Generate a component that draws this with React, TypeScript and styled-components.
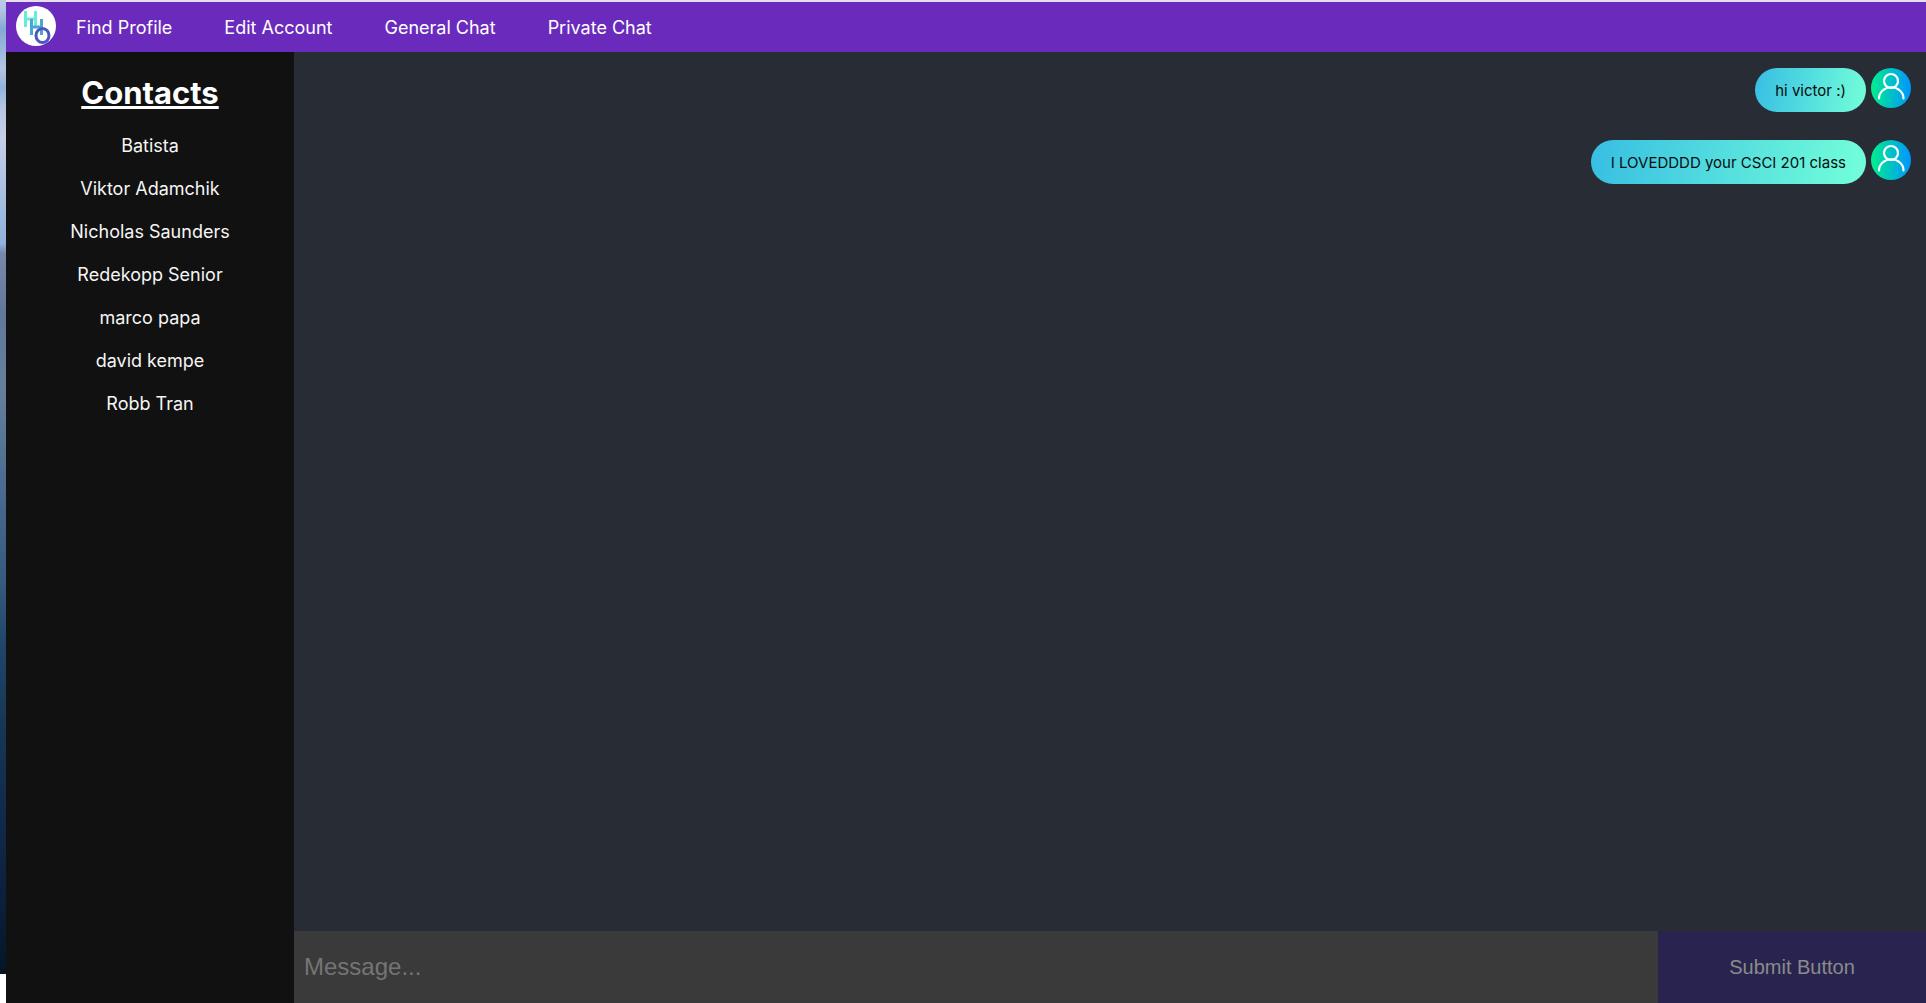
import React, { useState } from "react";
import styled, { createGlobalStyle } from "styled-components";

const GlobalStyle = createGlobalStyle`
  * { box-sizing: border-box; }
  body {
    margin: 0;
    background: #fff;
    font-family: Inter, "Liberation Sans", sans-serif;
  }
`;

const Desktop = styled.div`
  display: flex;
  min-height: 100vh;
`;

const WallpaperEdge = styled.div`
  flex: 0 0 6px;
  margin-bottom: 29px;
  background: linear-gradient(
    #b9cae6 0%,
    #b3c6e4 1%,
    #84aad4 3%,
    #9ab7dc 5%,
    #b4c6e2 7%,
    #94b4dc 9%,
    #b4c6e4 11%,
    #c6cfe6 14%,
    #b2c5e4 18%,
    #9dbae0 22%,
    #91b2dc 25%,
    #7888ab 26%,
    #62789b 32%,
    #65809c 40%,
    #4b6b90 50%,
    #35597f 60%,
    #1f476b 66%,
    #173756 74%,
    #11294a 84%,
    #0b1f3a 93%,
    #041525 100%
  );
`;

const Page = styled.div`
  flex: 1;
  min-width: 0;
  display: flex;
  flex-direction: column;
  border-top: 2px solid #e4dfee;
`;

const NavBar = styled.nav`
  display: flex;
  align-items: flex-start;
  gap: 52px;
  height: 50px;
  padding: 4px 10px 0;
  background: #6a2bbd;
`;

const Brand = styled.div`
  display: flex;
  align-items: flex-start;
  gap: 20px;
`;

const Logo = styled.svg`
  display: block;
  width: 40px;
  height: 40px;
`;

const NavLink = styled.a`
  color: #fff;
  font-size: 18px;
  line-height: 44px;
  text-decoration: none;
  white-space: nowrap;
`;

const Body = styled.div`
  flex: 1;
  display: flex;
`;

const Sidebar = styled.aside`
  flex: 0 0 15%;
  padding-top: 20px;
  background: #111;
  text-align: center;
`;

const SidebarTitle = styled.h1`
  margin: 0 0 10px;
  color: #fff;
  font-size: 31px;
  line-height: 42px;
  font-weight: 700;
  text-decoration: underline;
  text-decoration-thickness: 3px;
  text-underline-offset: 2px;
  text-decoration-skip-ink: none;
`;

const ContactList = styled.ul`
  margin: 0;
  padding: 0;
  list-style: none;
`;

const ContactLink = styled.a`
  display: block;
  color: #f5f5f5;
  font-size: 18px;
  line-height: 43px;
  text-decoration: none;
`;

const Chat = styled.main`
  flex: 1;
  min-width: 0;
  display: flex;
  flex-direction: column;
  background: #282c35;
`;

const Messages = styled.div`
  flex: 1;
  display: flex;
  flex-direction: column;
  gap: 28px;
  padding: 16px 15px;
`;

const MessageRow = styled.div`
  display: flex;
  justify-content: flex-end;
  align-items: flex-start;
  gap: 5px;
`;

const Bubble = styled.p`
  margin: 0;
  padding: 11px 20px 9px;
  border-radius: 22px;
  background: linear-gradient(100deg, #37bee3, #73ffd9);
  color: #060d0d;
  font-size: 15px;
  line-height: 24px;
`;

const AvatarIcon = styled.svg`
  display: block;
  width: 40px;
  height: 40px;
`;

const Composer = styled.form`
  display: flex;
  height: 72px;
`;

const MessageInput = styled.input`
  flex: 1;
  min-width: 0;
  padding: 0 10px;
  border: 0;
  outline: 0;
  background: #3a3a3a;
  color: #fff;
  font: 24px "Liberation Sans", Arial, sans-serif;
  &::placeholder {
    color: #757575;
    opacity: 1;
  }
`;

const SubmitButton = styled.button`
  flex: 0 0 268px;
  border: 0;
  background: #28244f;
  color: #8b8b8b;
  font: 20px "Liberation Sans", Arial, sans-serif;
`;

const navItems = ["Edit Account", "General Chat", "Private Chat"];

const contacts = [
  "Batista",
  "Viktor Adamchik",
  "Nicholas Saunders",
  "Redekopp Senior",
  "marco papa",
  "david kempe",
  "Robb Tran",
];

const messages = ["hi victor :)", "I LOVEDDDD your CSCI 201 class"];

function HhoLogo() {
  return (
    <Logo viewBox="0 0 40 40" aria-hidden="true">
      <circle cx="20" cy="20" r="20" fill="#fff" />
      <g fill="none" strokeWidth="3">
        <path d="M9.500 5v16M19.500 5v16M9.500 13h10" stroke="#66edda" />
        <path d="M15.500 13v16M25.500 13v16M15.500 21h10" stroke="#4aa5d4" />
        <ellipse cx="26.500" cy="29.500" rx="6.500" ry="7" stroke="#4c59bb" />
      </g>
    </Logo>
  );
}

function Avatar() {
  return (
    <AvatarIcon viewBox="0 0 40 40" aria-hidden="true">
      <defs>
        <linearGradient id="avatar-fill" x1="0" x2="1" y1="0" y2="0">
          <stop offset="0" stopColor="#00ee8c" />
          <stop offset="1" stopColor="#0095ff" />
        </linearGradient>
      </defs>
      <circle cx="20" cy="20" r="20" fill="url(#avatar-fill)" />
      <g fill="none" stroke="#fff" strokeWidth="2.200" strokeLinecap="round">
        <circle cx="20" cy="13" r="7" />
        <path d="M8 30.500a12 11 0 0 1 24.500 0" />
      </g>
    </AvatarIcon>
  );
}

export default function App() {
  const [draft, setDraft] = useState("");

  return (
    <>
      <GlobalStyle />
      <Desktop>
        <WallpaperEdge />
        <Page>
          <NavBar>
            <Brand>
              <HhoLogo />
              <NavLink href="#">Find Profile</NavLink>
            </Brand>
            {navItems.map((item) => (
              <NavLink key={item} href="#">
                {item}
              </NavLink>
            ))}
          </NavBar>
          <Body>
            <Sidebar>
              <SidebarTitle>Contacts</SidebarTitle>
              <ContactList>
                {contacts.map((name) => (
                  <li key={name}>
                    <ContactLink href="#">{name}</ContactLink>
                  </li>
                ))}
              </ContactList>
            </Sidebar>
            <Chat>
              <Messages>
                {messages.map((text) => (
                  <MessageRow key={text}>
                    <Bubble>{text}</Bubble>
                    <Avatar />
                  </MessageRow>
                ))}
              </Messages>
              <Composer onSubmit={(event) => event.preventDefault()}>
                <MessageInput
                  aria-label="Message"
                  placeholder="Message..."
                  value={draft}
                  onChange={(event) => setDraft(event.target.value)}
                />
                <SubmitButton type="submit" disabled={!draft}>
                  Submit Button
                </SubmitButton>
              </Composer>
            </Chat>
          </Body>
        </Page>
      </Desktop>
    </>
  );
}
